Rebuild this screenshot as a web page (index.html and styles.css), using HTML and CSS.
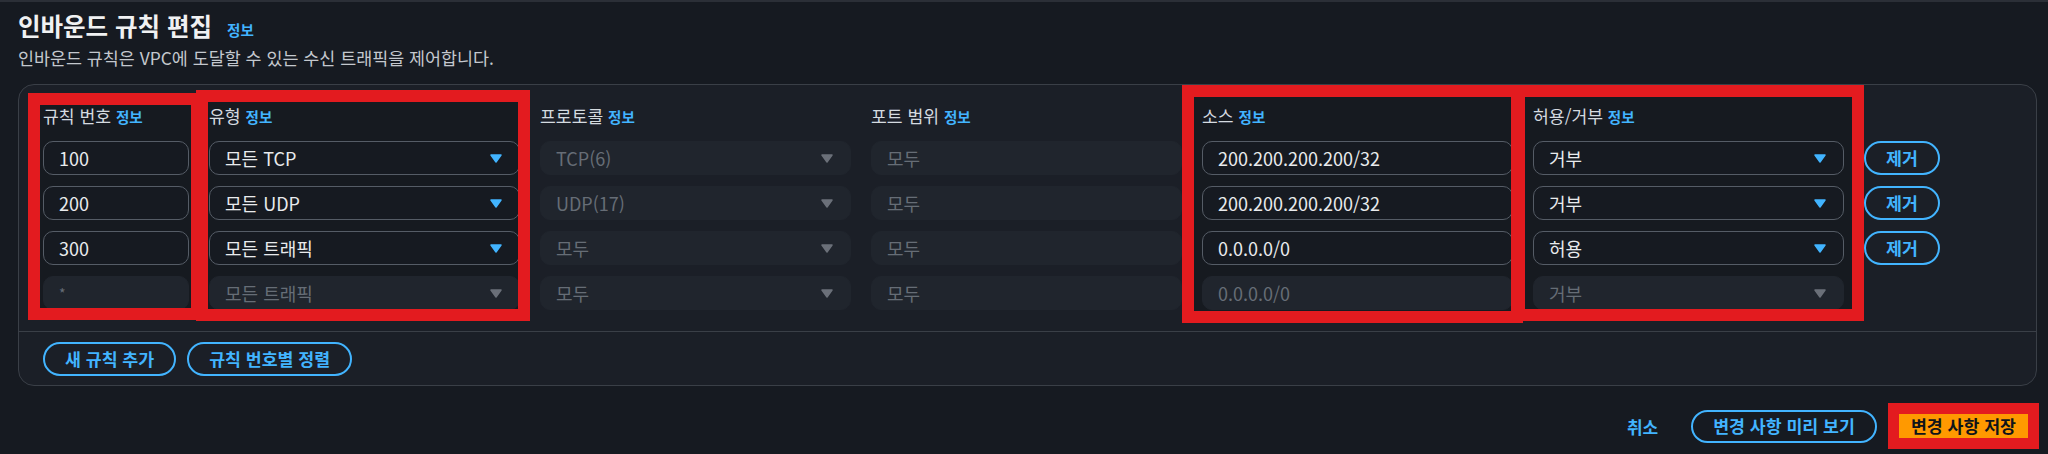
FILE: index.html
```html
<!DOCTYPE html>
<html lang="ko">
<head>
  <meta charset="UTF-8">
  <title>인바운드 규칙 편집</title>
  <link rel="stylesheet" href="styles.css">
</head>
<body>
  <div class="page">
    <h1>인바운드 규칙 편집<a class="info">정보</a></h1>
    <p class="desc">인바운드 규칙은 VPC에 도달할 수 있는 수신 트래픽을 제어합니다.</p>

    <div class="panel">
      <div class="rules">
        <div class="col num mark mark-a">
          <div class="head">규칙 번호 <a class="info">정보</a></div>
          <div class="field">100</div>
          <div class="field">200</div>
          <div class="field">300</div>
          <div class="field off star">*</div>
        </div>

        <div class="col mark mark-b">
          <div class="head">유형 <a class="info">정보</a></div>
          <div class="field">모든 TCP <svg viewBox="0 0 12 9"><polygon points="1,1 11,1 6,8"/></svg></div>
          <div class="field">모든 UDP <svg viewBox="0 0 12 9"><polygon points="1,1 11,1 6,8"/></svg></div>
          <div class="field">모든 트래픽 <svg viewBox="0 0 12 9"><polygon points="1,1 11,1 6,8"/></svg></div>
          <div class="field off">모든 트래픽 <svg viewBox="0 0 12 9"><polygon points="1,1 11,1 6,8"/></svg></div>
        </div>

        <div class="col">
          <div class="head">프로토콜 <a class="info">정보</a></div>
          <div class="field off">TCP(6) <svg viewBox="0 0 12 9"><polygon points="1,1 11,1 6,8"/></svg></div>
          <div class="field off">UDP(17) <svg viewBox="0 0 12 9"><polygon points="1,1 11,1 6,8"/></svg></div>
          <div class="field off">모두 <svg viewBox="0 0 12 9"><polygon points="1,1 11,1 6,8"/></svg></div>
          <div class="field off">모두 <svg viewBox="0 0 12 9"><polygon points="1,1 11,1 6,8"/></svg></div>
        </div>

        <div class="col">
          <div class="head">포트 범위 <a class="info">정보</a></div>
          <div class="field off">모두</div>
          <div class="field off">모두</div>
          <div class="field off">모두</div>
          <div class="field off">모두</div>
        </div>

        <div class="col mark mark-c">
          <div class="head">소스 <a class="info">정보</a></div>
          <div class="field">200.200.200.200/32</div>
          <div class="field">200.200.200.200/32</div>
          <div class="field">0.0.0.0/0</div>
          <div class="field off">0.0.0.0/0</div>
        </div>

        <div class="col mark mark-d">
          <div class="head">허용/거부 <a class="info">정보</a></div>
          <div class="field">거부 <svg viewBox="0 0 12 9"><polygon points="1,1 11,1 6,8"/></svg></div>
          <div class="field">거부 <svg viewBox="0 0 12 9"><polygon points="1,1 11,1 6,8"/></svg></div>
          <div class="field">허용 <svg viewBox="0 0 12 9"><polygon points="1,1 11,1 6,8"/></svg></div>
          <div class="field off">거부 <svg viewBox="0 0 12 9"><polygon points="1,1 11,1 6,8"/></svg></div>
        </div>

        <div class="col act">
          <div class="head"></div>
          <button class="btn">제거</button>
          <button class="btn">제거</button>
          <button class="btn">제거</button>
        </div>
      </div>

      <div class="panel-foot">
        <button class="btn">새 규칙 추가</button>
        <button class="btn">규칙 번호별 정렬</button>
      </div>
    </div>

    <div class="actions">
      <button class="link">취소</button>
      <button class="btn preview">변경 사항 미리 보기</button>
      <button class="save">변경 사항 저장</button>
    </div>
  </div>
</body>
</html>
```

FILE: styles.css
```css
body {
  margin: 0;
  background-color: #161a21;
  border-top: 2px solid #2b2f37;
  font-family: "Noto Sans CJK KR", "Noto Sans", sans-serif;
  color: #d5dbe0;
}

button {
  font-family: inherit;
  cursor: pointer;
}

.page {
  padding: 0 11px 0 18px;
}

h1 {
  margin: 8px 0 0;
  font-size: 24.5px;
  line-height: 32px;
  font-weight: 700;
  color: #f0f1f2;
}

.info {
  color: #42b4ff;
  font-size: 14.6px;
  font-weight: 700;
  text-decoration: none;
  cursor: pointer;
}

h1 .info {
  margin-left: 15px;
}

.desc {
  margin: 1px 0 0;
  font-size: 17.4px;
  line-height: 22px;
  color: #c4c8ce;
}

.panel {
  margin-top: 15px;
  background-color: #1b1f27;
  border: 1px solid #3a3f47;
  border-radius: 16px;
}

.rules {
  display: flex;
  gap: 20px;
  padding: 20px 24px 21px;
}

.col {
  position: relative;
  display: flex;
  flex-direction: column;
  gap: 11px;
  width: 311px;
}

.col.num {
  width: 146px;
}

.col.act {
  width: auto;
  align-items: flex-start;
}

.head {
  position: relative;
  z-index: 1;
  height: 22px;
  line-height: 22px;
  margin-bottom: 3px;
  font-size: 17.2px;
  color: #d5dbe0;
  white-space: nowrap;
}

.field {
  position: relative;
  z-index: 1;
  height: 34px;
  box-sizing: border-box;
  display: flex;
  align-items: center;
  justify-content: space-between;
  padding: 0 17px 0 15px;
  border: 1px solid #555c66;
  border-radius: 10px;
  background-color: #161a21;
  font-size: 18px;
  line-height: 32px;
  color: #e9ebed;
  white-space: nowrap;
}

.field svg {
  width: 12px;
  height: 9px;
  fill: #42b4ff;
  stroke: #42b4ff;
  stroke-width: 1.5;
  stroke-linejoin: round;
}

.field.off {
  background-color: #20252d;
  border-color: #20252d;
  color: #666d76;
}

.field.off svg {
  fill: #6b7079;
  stroke: #6b7079;
}

.field.star {
  font-size: 14px;
}

/* red highlight frames drawn over the columns */
.mark::before,
.mark::after {
  content: "";
  position: absolute;
}

.mark::before {
  z-index: 0;
  background-color: rgba(0, 0, 0, 0.16);
}

.mark::after {
  z-index: 2;
  border: 12px solid #e31b1f;
  pointer-events: none;
}

.mark-a::before,
.mark-a::after {
  inset: -12px -14px -10px -15px;
}

.mark-b::before,
.mark-b::after {
  inset: -15px -10px -11px -13px;
}

.mark-c::before,
.mark-c::after {
  inset: -20px -10px -13px -20px;
}

.mark-d::before,
.mark-d::after {
  inset: -20px -20px -11px -20px;
}

.btn {
  height: 34px;
  box-sizing: border-box;
  padding: 0 20px;
  border: 2px solid #42b4ff;
  border-radius: 18px;
  background: transparent;
  color: #42b4ff;
  font-size: 17.3px;
  font-weight: 700;
  line-height: 28px;
  white-space: nowrap;
}

.panel-foot {
  display: flex;
  gap: 11px;
  padding: 10px 24px 9px;
  border-top: 1px solid #3a3f47;
}

.actions {
  display: flex;
  justify-content: flex-end;
  align-items: center;
  margin: 17px -2px 0 0;
}

.link {
  margin-right: 33px;
  padding: 0;
  border: none;
  background: none;
  color: #42b4ff;
  font-size: 17px;
  font-weight: 700;
}

.btn.preview {
  margin-right: 11px;
  height: 33px;
}

.save {
  height: 46px;
  box-sizing: border-box;
  padding: 0 12px;
  border: 11px solid #e31b1f;
  background-color: #ff9900;
  color: #0f141a;
  font-size: 17.3px;
  font-weight: 700;
  line-height: 24px;
  white-space: nowrap;
}
```
